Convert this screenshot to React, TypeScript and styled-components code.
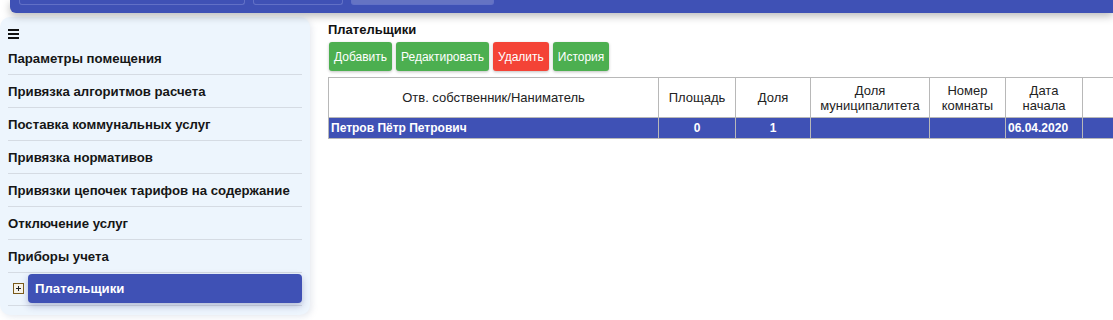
import React from "react";
import styled, { createGlobalStyle } from "styled-components";

const Global = createGlobalStyle`
  html, body { margin: 0; padding: 0; background: #fff; }
  body { font-family: "Liberation Sans", Arial, sans-serif; width: 1113px; height: 320px; overflow: hidden; }
  * { box-sizing: border-box; }
`;

const Page = styled.div`
  display: flex;
  flex-direction: column;
  width: 1113px;
  height: 320px;
  overflow: hidden;
`;

const TopBar = styled.div`
  margin-left: 10px;
  height: 13px;
  background: #3f51b5;
  border-bottom-left-radius: 6px;
  box-shadow: 0 3px 8px rgba(0, 0, 0, 0.28);
  display: flex;
  gap: 8px;
  padding-left: 9px;
  position: relative;
  z-index: 2;
`;

const TopField = styled.div<{ $w: number; $filled?: boolean }>`
  width: ${(p) => p.$w}px;
  height: 5px;
  border: 1px solid #6170c6;
  border-top: none;
  border-radius: 0 0 3px 3px;
  background: ${(p) => (p.$filled ? "#6573c3" : "transparent")};
`;

const Main = styled.div`
  display: flex;
  align-items: flex-start;
  gap: 18px;
  padding-top: 4px;
`;

const Sidebar = styled.div`
  width: 310px;
  height: 298px;
  background: #edf5fd;
  border-radius: 10px;
  box-shadow: 2px 2px 6px rgba(120, 140, 170, 0.18);
  padding: 12px 8px 0 8px;
  display: flex;
  flex-direction: column;
`;

const Burger = styled.div`
  width: 11px;
  height: 10px;
  display: flex;
  flex-direction: column;
  justify-content: space-between;
  margin-bottom: 3px;
  span {
    display: block;
    height: 2px;
    background: #111;
  }
`;

const MenuItem = styled.div`
  height: 33px;
  border-bottom: 1px solid #d5dbe3;
  display: flex;
  align-items: center;
  font-size: 13.2px;
  font-weight: bold;
  color: #161616;
`;

const ActiveRow = styled.div`
  height: 33px;
  border-bottom: 1px solid #d5dbe3;
  display: flex;
  align-items: center;
  gap: 4px;
  padding-left: 5px;
  padding-bottom: 1px;
`;

const PlusBox = styled.div`
  width: 11px;
  height: 11px;
  border: 1px solid #7a5a1a;
  background: #f6f2e8;
  position: relative;
  &::before, &::after {
    content: "";
    position: absolute;
    background: #222;
  }
  &::before { left: 2px; right: 2px; top: 4px; height: 1px; }
  &::after { top: 2px; bottom: 2px; left: 4px; width: 1px; }
`;

const ActiveItem = styled.div`
  flex: 1;
  height: 29px;
  background: #3f51b5;
  border-radius: 4px;
  box-shadow: 0 3px 7px rgba(40, 50, 120, 0.3);
  color: #fff;
  font-size: 13.2px;
  font-weight: bold;
  display: flex;
  align-items: center;
  padding-left: 7px;
`;

const Content = styled.div`
  flex: 1;
  display: flex;
  flex-direction: column;
  padding-top: 3px;
  min-width: 0;
`;

const Heading = styled.div`
  font-size: 13px;
  font-weight: bold;
  color: #111;
  height: 19px;
  line-height: 19px;
`;

const Toolbar = styled.div`
  display: flex;
  gap: 4px;
  margin-left: 1px;
  margin-top: 3px;
`;

const Button = styled.div<{ $variant?: "danger" }>`
  height: 29px;
  padding: 0 5px;
  background: ${(p) => (p.$variant === "danger" ? "#f44336" : "#4caf50")};
  color: #fff;
  font-size: 12px;
  border-radius: 3px;
  display: flex;
  align-items: center;
  box-shadow: 0 1px 3px rgba(0, 0, 0, 0.25);
`;

const TableWrap = styled.div`
  margin-top: 6px;
  width: 900px;
`;

const Table = styled.table`
  border-collapse: collapse;
  table-layout: fixed;
  width: 900px;
  font-size: 13px;
`;

const Th = styled.th`
  border: 1px solid #b8b8b8;
  font-weight: normal;
  color: #222;
  height: 40px;
  padding: 0 2px;
  line-height: 15px;
  text-align: center;
  vertical-align: middle;
`;

const Td = styled.td<{ $align?: "left" | "center" }>`
  border: 1px solid #b8b8b8;
  background: #3f51b5;
  color: #fff;
  font-weight: bold;
  font-size: 12px;
  height: 21px;
  padding: 0 2px;
  text-align: ${(p) => p.$align ?? "center"};
`;

const menu = [
  "Параметры помещения",
  "Привязка алгоритмов расчета",
  "Поставка коммунальных услуг",
  "Привязка нормативов",
  "Привязки цепочек тарифов на содержание",
  "Отключение услуг",
  "Приборы учета",
];

const cols = [330, 77, 75, 119, 76, 77, 146];

export default function App() {
  return (
    <Page>
      <Global />
      <TopBar>
        <TopField $w={226} />
        <TopField $w={90} />
        <TopField $w={143} $filled />
      </TopBar>
      <Main>
        <Sidebar>
          <Burger>
            <span />
            <span />
            <span />
          </Burger>
          {menu.map((m) => (
            <MenuItem key={m}>{m}</MenuItem>
          ))}
          <ActiveRow>
            <PlusBox />
            <ActiveItem>Плательщики</ActiveItem>
          </ActiveRow>
        </Sidebar>
        <Content>
          <Heading>Плательщики</Heading>
          <Toolbar>
            <Button>Добавить</Button>
            <Button>Редактировать</Button>
            <Button $variant="danger">Удалить</Button>
            <Button>История</Button>
          </Toolbar>
          <TableWrap>
            <Table>
              <colgroup>
                {cols.map((w, i) => (
                  <col key={i} style={{ width: w }} />
                ))}
              </colgroup>
              <thead>
                <tr>
                  <Th>Отв. собственник/Наниматель</Th>
                  <Th>Площадь</Th>
                  <Th>Доля</Th>
                  <Th>Доля<br />муниципалитета</Th>
                  <Th>Номер<br />комнаты</Th>
                  <Th>Дата<br />начала</Th>
                  <Th />
                </tr>
              </thead>
              <tbody>
                <tr>
                  <Td $align="left">Петров Пётр Петрович</Td>
                  <Td>0</Td>
                  <Td>1</Td>
                  <Td />
                  <Td />
                  <Td $align="left">06.04.2020</Td>
                  <Td />
                </tr>
              </tbody>
            </Table>
          </TableWrap>
        </Content>
      </Main>
    </Page>
  );
}
